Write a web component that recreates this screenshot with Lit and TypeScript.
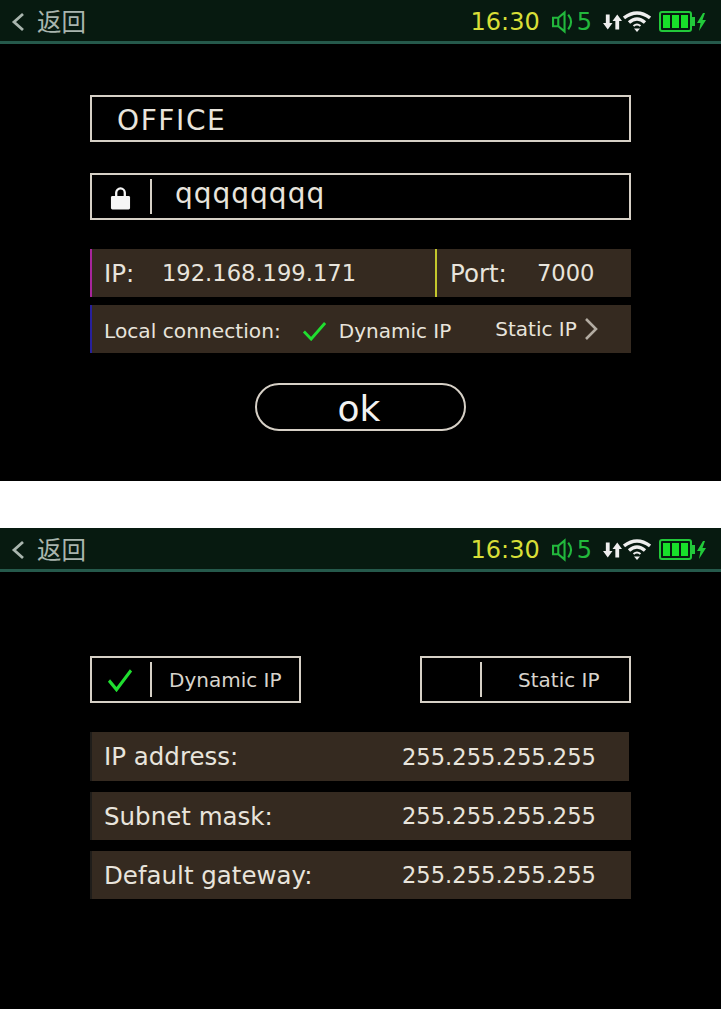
import { LitElement, html, css } from 'lit';
import { customElement } from 'lit/decorators.js';

const check = (w: number, h: number) => html`
  <svg width=${w} height=${h} viewBox="0 0 26 20" preserveAspectRatio="none" fill="none">
    <path d="M2 10.5 L9.5 18 L24 2" stroke="#20de30" stroke-width="3" />
  </svg>`;

@customElement('status-bar')
export class StatusBar extends LitElement {
  static styles = css`
    :host {
      display: flex;
      align-items: center;
      height: 41px;
      background: #071a10;
      border-bottom: 3px solid #25594b;
      font-family: 'DejaVu Sans', 'Noto Sans CJK SC', sans-serif;
      padding: 0 15px 0 11px;
    }
    .back {
      color: #a9b5ae;
      font-size: 24.5px;
      font-family: 'Noto Sans CJK SC', sans-serif;
      font-weight: 400;
      margin-left: 11px;
      line-height: 41px;
    }
    .time {
      margin-left: auto;
      color: #d8de37;
      font-size: 24px;
      padding-top: 3px;
    }
    .vol {
      margin-left: 2px;
      color: #22b83c;
      font-size: 24px;
      line-height: 41px;
      padding-top: 3px;
    }
    svg { display: block; flex: none; margin-top: 2px; }
    .speaker { margin-left: 12px; }
    .arrows { margin-left: 11px; }
    .wifi { margin-left: 1px; }
    .battery { margin-left: 8px; }
    .bolt { margin-left: 2px; }
  `;

  render() {
    return html`
      <svg width="15" height="22" viewBox="0 0 15 22" fill="none">
        <path d="M12 3 L3 11 L12 19" stroke="#a9b5ae" stroke-width="2.8" />
      </svg>
      <span class="back">返回</span>
      <span class="time">16:30</span>
      <svg class="speaker" width="23" height="24" viewBox="0 0 22 22" fill="none" stroke="#22b83c" stroke-width="2">
        <path d="M1 7 H6 L12 2 V20 L6 15 H1 Z" />
        <path d="M6 7 V15" />
        <path d="M15.5 4 Q21 11 15.5 18" />
      </svg>
      <span class="vol">5</span>
      <svg class="arrows" width="19" height="18" viewBox="0 0 20 18" fill="#eee">
        <path d="M3 1 H7 V10 H10 L5 17 L0 10 H3 Z" />
        <path d="M13 17 H17 V8 H20 L15 1 L10 8 H13 Z" />
      </svg>
      <svg class="wifi" width="28" height="23" viewBox="0 0 28 22" fill="none" stroke="#eee" stroke-width="3.4">
        <path d="M1 7.5 Q14 -2.5 27 7.5" />
        <path d="M6 12 Q14 5 22 12" />
        <path d="M10.5 15.5 Q14 12.5 17.5 15.5" stroke-width="2" />
        <path d="M11 18 H17 L14 21.5 Z" fill="#eee" stroke="none" />
      </svg>
      <svg class="battery" width="36" height="21" viewBox="0 0 36 21">
        <rect x="1" y="1" width="31" height="19" rx="2" fill="none" stroke="#22c93a" stroke-width="2" />
        <rect x="32" y="6" width="4" height="9" fill="#22c93a" />
        <rect x="4" y="4" width="7" height="13" fill="#18e02a" />
        <rect x="13" y="4" width="7" height="13" fill="#18e02a" />
        <rect x="22" y="4" width="7" height="13" fill="#18e02a" />
      </svg>
      <svg class="bolt" width="9" height="20" viewBox="0 0 9 18">
        <path d="M6 0 L0 10 H3.5 L2 18 L9 7 H5.5 L8 0 Z" fill="#22c93a" />
      </svg>
    `;
  }
}

@customElement('app-root')
export class AppRoot extends LitElement {
  static styles = css`
    :host {
      display: block;
      width: 721px;
      background: #fff;
      font-family: 'DejaVu Sans', sans-serif;
      color: #e8e4dc;
    }
    .panel {
      height: 481px;
      background: #000;
      overflow: hidden;
    }
    .panel + .panel { margin-top: 47px; }
    .form {
      display: flex;
      flex-direction: column;
      width: 541px;
      margin-left: 90px;
    }
    .first { padding-top: 51px; }
    .second { padding-top: 84px; }

    .field {
      box-sizing: border-box;
      display: flex;
      align-items: center;
      height: 47px;
      border: 2px solid #d6d0c6;
    }
    .name { padding: 3px 0 0 25px; font-size: 28px; letter-spacing: 1.6px; }
    .pass { margin-top: 31px; }
    .cell {
      box-sizing: border-box;
      flex: none;
      display: flex;
      align-items: center;
      justify-content: center;
      height: 35px;
      width: 60px;
      border-right: 2px solid #d6d0c6;
    }
    .cell svg { display: block; margin-right: 2px; }
    .lock { margin-top: 3px; }
    .pass .value { margin-left: 23px; font-size: 28px; letter-spacing: 1px; padding-bottom: 7px; }

    .row {
      display: flex;
      align-items: center;
      box-sizing: border-box;
      height: 48px;
      background: #352a20;
      border-left: 2px solid #1f1d1a;
      padding-left: 12px;
      font-size: 24.5px;
    }
    .num { font-size: 22.6px; }
    .split { display: flex; margin-top: 29px; }
    .split .ip { width: 345px; border-left-color: #a8259c; }
    .split .port { flex: 1; padding-left: 13px; border-left-color: #c3c72c; }
    .ip .label { width: 58px; }
    .port .label { width: 87px; }
    .local {
      margin-top: 8px;
      border-left-color: #27209c;
      font-size: 20px;
    }
    .local .lead { padding-top: 3px; font-size: 20.2px; }
    .local .text { padding-top: 3px; }
    .local .dyn { margin-left: 21px; display: flex; align-items: center; gap: 12px; }
    .local .dyn svg { margin-top: 3px; }
    .local .stat { margin-left: 44px; display: flex; align-items: center; gap: 7px; }
    .ok {
      box-sizing: border-box;
      width: 211px;
      height: 48px;
      margin: 30px 0 0 165px;
      border: 2px solid #d6d0c6;
      border-radius: 24px;
      background: none;
      color: #f2f2f2;
      font: 36px/40px 'DejaVu Sans', sans-serif;
      padding: 3px 3px 0 0;
    }

    .modes { display: flex; justify-content: space-between; }
    .mode { width: 211px; font-size: 20px; color: #d8d4cc; }
    .mode .text { margin-left: 17px; }
    .mode.right .text { margin-left: 36px; }
    .info { margin-top: 29px; display: flex; flex-direction: column; gap: 11px; }
    .info .row { justify-content: space-between; padding-right: 35px; }
    .info .row:first-child { height: 49px; width: 539px; padding-right: 33px; }
  `;

  render() {
    return html`
      <section class="panel">
        <status-bar></status-bar>
        <div class="form first">
          <div class="field name">OFFICE</div>
          <div class="field pass">
            <div class="cell">
              <svg class="lock" width="21" height="24" viewBox="0 0 22 24">
                <path d="M6.5 11 V6.5 a4.5 4.5 0 0 1 9 0 V11" fill="none" stroke="#f5f5f5" stroke-width="2.4" />
                <rect x="1" y="10" width="20" height="14" rx="1.5" fill="#f5f5f5" />
              </svg>
            </div>
            <span class="value">qqqqqqqq</span>
          </div>
          <div class="split">
            <div class="row ip"><span class="label">IP:</span><span class="num">192.168.199.171</span></div>
            <div class="row port"><span class="label">Port:</span><span class="num">7000</span></div>
          </div>
          <div class="row local">
            <span class="lead">Local connection:</span>
            <span class="dyn">${check(25, 20)}<span class="text">Dynamic IP</span></span>
            <span class="stat">Static IP
              <svg width="14" height="24" viewBox="0 0 14 24" fill="none">
                <path d="M2 2 L12 12 L2 22" stroke="#b3aca2" stroke-width="2.6" />
              </svg>
            </span>
          </div>
          <button class="ok">ok</button>
        </div>
      </section>
      <section class="panel">
        <status-bar></status-bar>
        <div class="form second">
          <div class="modes">
            <div class="field mode"><div class="cell">${check(26, 24)}</div><span class="text">Dynamic IP</span></div>
            <div class="field mode right"><div class="cell"></div><span class="text">Static IP</span></div>
          </div>
          <div class="info">
            <div class="row"><span>IP address:</span><span class="num">255.255.255.255</span></div>
            <div class="row"><span>Subnet mask:</span><span class="num">255.255.255.255</span></div>
            <div class="row"><span>Default gateway:</span><span class="num">255.255.255.255</span></div>
          </div>
        </div>
      </section>
    `;
  }
}
